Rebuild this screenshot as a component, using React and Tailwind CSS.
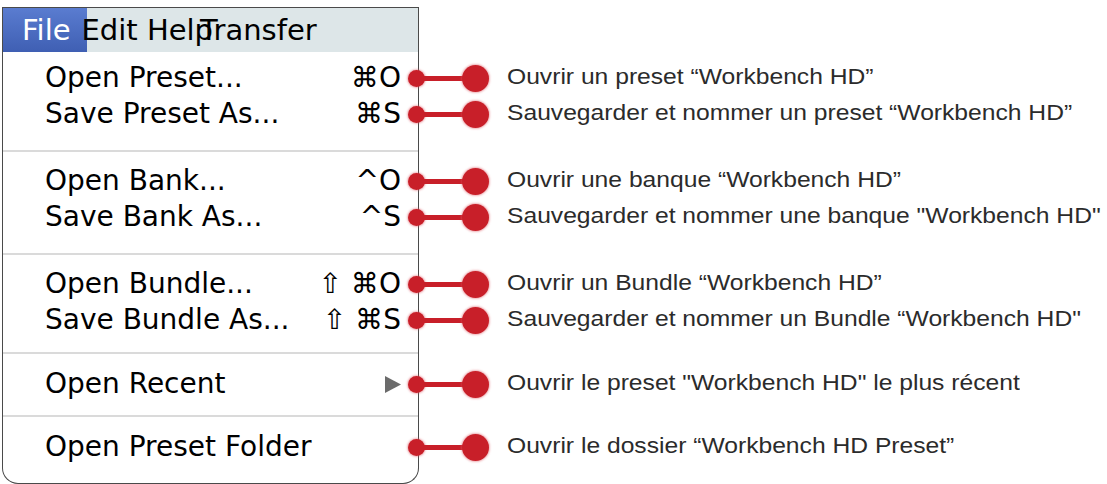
import React from 'react'

const red = 'bg-[#c81f29] shadow-[0_0_2px_1px_rgba(220,80,90,0.45)]'

function Cell({ className = '', children }) {
    return (
        <div className={`w-[417px] ml-[2px] shrink-0 border-x-[1.5px] border-[#4a4a4a] bg-white ${className}`}>
            {children}
        </div>
    )
}

function Connector({ text }) {
    return (
        <div className="relative z-10 -ml-[11px] flex items-center">
            <div className={`w-[17px] h-[17px] rounded-full ${red}`} />
            <div className="w-[39px] h-[5px] -mx-[1px] bg-[#c81f29]" />
            <div className={`w-[27px] h-[27px] rounded-full ${red}`} />
            <span className="ml-[18px] -mt-[4px] text-[22px] scale-x-[1.12] origin-left text-[#2b2b2b] font-['Liberation_Sans',Arial,sans-serif] whitespace-nowrap">
                {text}
            </span>
        </div>
    )
}

function Item({ label, shortcut, desc }) {
    return (
        <div className="flex items-center h-[36px]">
            <Cell className="h-full flex items-center justify-between pl-[42px] pr-[17px]">
                <span className="text-[28px] leading-none text-black">{label}</span>
                {shortcut}
            </Cell>
            <Connector text={desc} />
        </div>
    )
}

function Gap({ h }) {
    return (
        <div className="flex" style={{ height: h }}>
            <Cell className="h-full" />
        </div>
    )
}

function Sep() {
    return (
        <div className="flex h-[2px]">
            <Cell className="h-full flex">
                <div className="w-full h-[2px] bg-[#dadada]" />
            </Cell>
        </div>
    )
}

const Key = ({ children }) => (
    <span className="text-[28px] leading-none text-black whitespace-nowrap">{children}</span>
)

export default function App() {
    return (
        <div className="w-[1107px] h-[484px] bg-white overflow-hidden pt-[7px] font-['DejaVu_Sans',sans-serif]">
            {/* menu bar */}
            <div className="flex">
                <div className="w-[417px] ml-[2px] h-[45px] border-x-[1.5px] border-t-[1.5px] border-[#4a4a4a] bg-[#dde6e8] flex items-stretch text-[29px] leading-none">
                    <span className="flex items-center pl-[19px] pr-[16px] bg-gradient-to-b from-[#5a7cd0] to-[#3f5fb3] text-white">File</span>
                    <span className="flex items-center -ml-[5px] text-black">Edit Help</span>
                    <span className="flex items-center -ml-[13px] text-black">Transfer</span>
                </div>
            </div>

            <Gap h={8} />
            <Item label="Open Preset..." shortcut={<Key>⌘O</Key>} desc="Ouvrir un preset “Workbench HD”" />
            <Item label="Save Preset As..." shortcut={<Key>⌘S</Key>} desc="Sauvegarder et nommer un preset “Workbench HD”" />
            <Gap h={18} />
            <Sep />
            <Gap h={11} />
            <Item label="Open Bank..." shortcut={<Key>^O</Key>} desc="Ouvrir une banque “Workbench HD”" />
            <Item label="Save Bank As..." shortcut={<Key>^S</Key>} desc={'Sauvegarder et nommer une banque "Workbench HD"'} />
            <Gap h={18} />
            <Sep />
            <Gap h={11} />
            <Item label="Open Bundle..." shortcut={<Key>⇧ ⌘O</Key>} desc="Ouvrir un Bundle “Workbench HD”" />
            <Item label="Save Bundle As..." shortcut={<Key>⇧ ⌘S</Key>} desc={'Sauvegarder et nommer un Bundle “Workbench HD"'} />
            <Gap h={14} />
            <Sep />
            <Gap h={12} />
            <Item
                label="Open Recent"
                shortcut={
                    <svg width="16" height="17" viewBox="0 0 16 17">
                        <path d="M0 0 L16 8.5 L0 17 Z" fill="#6b6b6b" />
                    </svg>
                }
                desc={'Ouvrir le preset "Workbench HD" le plus récent'}
            />
            <Gap h={13} />
            <Sep />
            <Gap h={12} />
            <Item label="Open Preset Folder" desc="Ouvrir le dossier “Workbench HD Preset”" />
            <div className="flex h-[19px]">
                <div className="w-[417px] ml-[2px] h-full border-x-[1.5px] border-b-[1.5px] border-[#4a4a4a] rounded-b-[16px]" />
            </div>
        </div>
    )
}
